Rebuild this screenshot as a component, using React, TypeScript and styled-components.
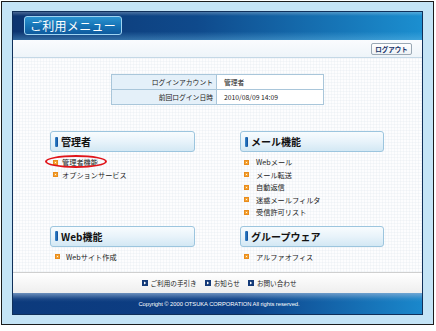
import React from 'react';
import styled, { createGlobalStyle } from 'styled-components';

const GlobalStyle = createGlobalStyle`
  html, body {
    margin: 0;
    padding: 0;
    background: #ffffff;
  }
  body {
    font-family: "Noto Sans CJK JP", "Liberation Sans", sans-serif;
  }
`;

const Frame = styled.div`
  box-sizing: border-box;
  width: 433px;
  height: 324px;
  margin: 1px 0 0 1px;
  padding: 9px 10px 9px 10px;
  border: 1px solid #1c1c1c;
  background: #c4e4f6;
`;

const Panel = styled.div`
  box-sizing: border-box;
  display: flex;
  flex-direction: column;
  width: 411px;
  height: 304px;
  border: 1px solid #10305a;
  background: #ffffff;
`;

const Header = styled.div`
  box-sizing: border-box;
  display: flex;
  align-items: center;
  height: 28px;
  padding: 0 0 1px 11px;
  background:
    linear-gradient(to bottom, rgba(255, 255, 255, 0.25) 0px, rgba(255, 255, 255, 0) 4px, rgba(255, 255, 255, 0) 70%, rgba(120, 200, 240, 0.35) 100%),
    linear-gradient(to right, #0c3470 0%, #0f4a8c 45%, #1b8fd0 100%);
`;

const TitleButton = styled.div`
  box-sizing: border-box;
  display: flex;
  align-items: center;
  justify-content: center;
  width: 98px;
  height: 19px;
  border: 1px solid #9fd4f2;
  border-radius: 3px;
  background: linear-gradient(to bottom, #2a93d0 0%, #1572b4 55%, #0f5a9e 100%);
  color: #ffffff;
  font-size: 12px;
  letter-spacing: 0.3px;
`;

const SubBar = styled.div`
  box-sizing: border-box;
  display: flex;
  justify-content: flex-end;
  align-items: center;
  height: 18px;
  padding: 0 10px 0 0;
  border-bottom: 1px solid #c4d8e6;
  background: linear-gradient(to bottom, #fafcfe, #eef4f9);
`;

const LogoutButton = styled.button`
  box-sizing: border-box;
  width: 41px;
  height: 12px;
  padding: 0;
  border: 1px solid #9aa8b4;
  border-radius: 2px;
  background: linear-gradient(to bottom, #ffffff, #eef2f5);
  color: #17336a;
  font-family: "Noto Sans CJK JP", sans-serif;
  font-size: 6.5px;
  font-weight: bold;
  line-height: 10px;
`;

const Content = styled.div`
  box-sizing: border-box;
  height: 214px;
  padding-top: 16px;
  background-color: #fdfdfe;
  background-image:
    repeating-linear-gradient(to right, rgba(225, 232, 238, 0.3) 0px, rgba(225, 232, 238, 0.3) 1px, transparent 1px, transparent 3px),
    repeating-linear-gradient(to bottom, rgba(225, 232, 238, 0.3) 0px, rgba(225, 232, 238, 0.3) 1px, transparent 1px, transparent 3px);
`;

const InfoTable = styled.div`
  box-sizing: border-box;
  display: grid;
  grid-template-columns: 105px 1fr;
  width: 213px;
  margin: 0 auto;
  border: 1px solid #a9c6da;
`;

const InfoLabel = styled.div<{ last?: boolean }>`
  height: 14px;
  padding-right: 3px;
  text-align: right;
  background: #e4f0f9;
  border-right: 1px solid #a9c6da;
  border-bottom: ${(props) => (props.last ? 'none' : '1px solid #a9c6da')};
  color: #222;
  font-size: 6.8px;
  line-height: 14px;
`;

const InfoValue = styled.div<{ last?: boolean }>`
  height: 14px;
  padding-left: 7px;
  background: #ffffff;
  border-bottom: ${(props) => (props.last ? 'none' : '1px solid #a9c6da')};
  color: #222;
  font-size: 6.8px;
  line-height: 14px;
`;

const Sections = styled.div`
  display: grid;
  grid-template-columns: 145px 144px;
  column-gap: 45px;
  row-gap: 7px;
  justify-content: center;
  margin-top: 26px;
  padding-right: 1px;
`;

const SectionHead = styled.div`
  box-sizing: border-box;
  display: flex;
  align-items: center;
  gap: 3px;
  height: 21px;
  padding-left: 4px;
  border: 1px solid #9cc5de;
  border-radius: 3px;
  background: linear-gradient(to bottom, #f8fcfe 0%, #e8f3fa 50%, #d3e8f4 100%);
  color: #111;
  font-size: 10px;
  font-weight: bold;
`;

const SectionMark = styled.span`
  display: block;
  width: 3px;
  height: 10px;
  border-radius: 1px;
  background: linear-gradient(to right, #3a8ad0, #0c4c98);
`;

const ItemList = styled.ul`
  margin: 4px 0 0;
  padding: 0;
  list-style: none;
`;

const Item = styled.li<{ indent: number; gap: number }>`
  position: relative;
  display: flex;
  align-items: center;
  gap: ${(props) => props.gap}px;
  height: 12.5px;
  padding-left: ${(props) => props.indent}px;
  color: #222;
  font-size: 7.2px;
`;

const Bullet = styled.span`
  box-sizing: border-box;
  display: block;
  width: 5px;
  height: 5px;
  border: 1px solid #e98c1c;
  background: radial-gradient(circle, #fff6e0 0 35%, #f4a437 45%);
`;

const Circle = styled.span`
  box-sizing: border-box;
  position: absolute;
  left: -5px;
  top: -1px;
  width: 62px;
  height: 13px;
  border: 2px solid #e0141a;
  border-radius: 50%;
`;

const LinksBar = styled.div`
  box-sizing: border-box;
  display: flex;
  justify-content: center;
  align-items: center;
  gap: 8px;
  height: 21px;
  padding: 0 0 0 3px;
  border-top: 1px solid #cfcfcf;
  background: linear-gradient(to bottom, #ffffff, #eeeeee);
`;

const FooterLink = styled.a`
  display: flex;
  align-items: center;
  gap: 3px;
  color: #222;
  font-size: 6.6px;
  text-decoration: none;
`;

const Footer = styled.div`
  box-sizing: border-box;
  display: flex;
  justify-content: center;
  align-items: center;
  height: 21px;
  padding-left: 3px;
  background:
    linear-gradient(to bottom, rgba(150, 180, 215, 0.7) 0px, rgba(150, 180, 215, 0.1) 6px, rgba(0, 0, 0, 0) 9px),
    linear-gradient(to right, #0c3a7c 0%, #0d3f86 55%, #1a88cc 100%);
  color: #ffffff;
  font-family: "Liberation Sans", Arial, sans-serif;
  font-size: 5.8px;
  letter-spacing: -0.05px;
`;

const LinkIcon: React.FC = () => (
  <svg width="6" height="6" viewBox="0 0 6 6">
    <rect x="0" y="0" width="6" height="6" fill="#143a78" />
    <path d="M2 1.5 L4.2 3 L2 4.5 Z" fill="#ffffff" />
  </svg>
);

interface Section {
  title: string;
  indent: number;
  gap: number;
  items: string[];
  circled?: string;
}

const sections: Section[] = [
  { title: '管理者', indent: 3, gap: 4, items: ['管理者機能', 'オプションサービス'], circled: '管理者機能' },
  { title: 'メール機能', indent: 4, gap: 7, items: ['Webメール', 'メール転送', '自動返信', '迷惑メールフィルタ', '受信許可リスト'] },
  { title: 'Web機能', indent: 5, gap: 6, items: ['Webサイト作成'] },
  { title: 'グループウェア', indent: 4, gap: 7, items: ['アルファオフィス'] },
];

const App: React.FC = () => {
  return (
    <>
      <GlobalStyle />
      <Frame>
        <Panel>
          <Header>
            <TitleButton>ご利用メニュー</TitleButton>
          </Header>
          <SubBar>
            <LogoutButton>ログアウト</LogoutButton>
          </SubBar>
          <Content>
            <InfoTable>
              <InfoLabel>ログインアカウント</InfoLabel>
              <InfoValue>管理者</InfoValue>
              <InfoLabel last>前回ログイン日時</InfoLabel>
              <InfoValue last>2010/08/09 14:09</InfoValue>
            </InfoTable>
            <Sections>
              {sections.map((section) => (
                <div key={section.title}>
                  <SectionHead>
                    <SectionMark />
                    {section.title}
                  </SectionHead>
                  <ItemList>
                    {section.items.map((item) => (
                      <Item key={item} indent={section.indent} gap={section.gap}>
                        <Bullet />
                        {item}
                        {section.circled === item && <Circle />}
                      </Item>
                    ))}
                  </ItemList>
                </div>
              ))}
            </Sections>
          </Content>
          <LinksBar>
            <FooterLink>
              <LinkIcon />
              ご利用の手引き
            </FooterLink>
            <FooterLink>
              <LinkIcon />
              お知らせ
            </FooterLink>
            <FooterLink>
              <LinkIcon />
              お問い合わせ
            </FooterLink>
          </LinksBar>
          <Footer>Copyright © 2000 OTSUKA CORPORATION All rights reserved.</Footer>
        </Panel>
      </Frame>
    </>
  );
};

export default App;
